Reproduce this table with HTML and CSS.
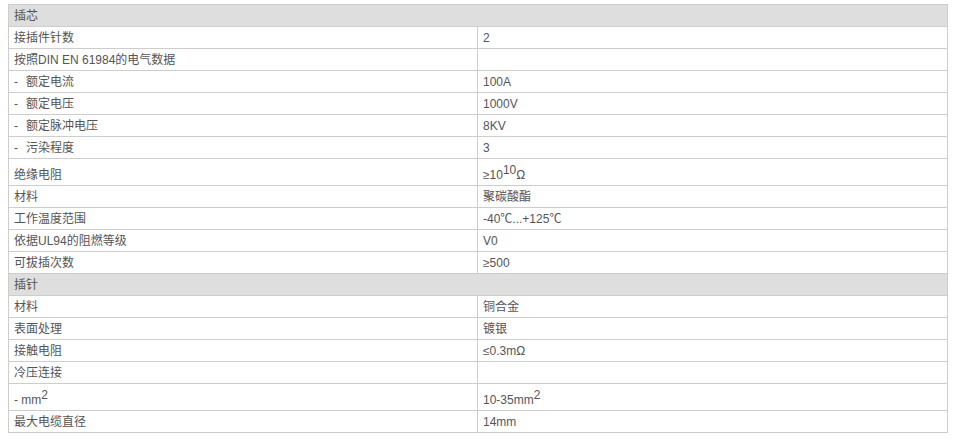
FILE: index.html
```html
<!DOCTYPE html>
<html lang="zh">
<head>
<meta charset="utf-8">
<link rel="stylesheet" href="styles.css">
</head>
<body>
<table class="spec">
  <colgroup><col class="c1"><col class="c2"></colgroup>
  <tr class="head"><td colspan="2">插芯</td></tr>
  <tr><td>接插件针数</td><td>2</td></tr>
  <tr><td>按照DIN EN 61984的电气数据</td><td></td></tr>
  <tr><td><span class="dash">-</span>额定电流</td><td>100A</td></tr>
  <tr><td><span class="dash">-</span>额定电压</td><td>1000V</td></tr>
  <tr><td><span class="dash">-</span>额定脉冲电压</td><td>8KV</td></tr>
  <tr><td><span class="dash">-</span>污染程度</td><td>3</td></tr>
  <tr class="tall"><td>绝缘电阻</td><td>≥10<sup>10</sup>Ω</td></tr>
  <tr><td>材料</td><td>聚碳酸酯</td></tr>
  <tr><td>工作温度范围</td><td>-40℃...+125℃</td></tr>
  <tr><td>依据UL94的阻燃等级</td><td>V0</td></tr>
  <tr><td>可拔插次数</td><td>≥500</td></tr>
  <tr class="head"><td colspan="2">插针</td></tr>
  <tr><td>材料</td><td>铜合金</td></tr>
  <tr><td>表面处理</td><td>镀银</td></tr>
  <tr><td>接触电阻</td><td>≤0.3mΩ</td></tr>
  <tr><td>冷压连接</td><td></td></tr>
  <tr class="tall"><td>- mm<sup>2</sup></td><td>10-35mm<sup>2</sup></td></tr>
  <tr><td>最大电缆直径</td><td>14mm</td></tr>
</table>
</body>
</html>
```
FILE: styles.css
```css
html, body { background: #fff; }
body {
  margin: 4px 8px;
  font-family: "Liberation Sans", Arial, "Noto Sans CJK SC", sans-serif;
  font-size: 12px;
  color: #555;
}
.spec {
  width: 940px;
  border-collapse: collapse;
  table-layout: fixed;
}
.spec .c1 { width: 469px; }
.spec tr { height: 22px; }
.spec td {
  border: 1px solid #cdcdcd;
  padding: 0 5px;
  line-height: 14px;
  vertical-align: middle;
  white-space: nowrap;
}
.spec tr.tall { height: 27px; }
.spec tr.tall td { padding-top: 5px; }
.spec tr.head td { background: #dedede; }
.spec .dash {
  display: inline-block;
  width: 12px;
}
.spec sup {
  font-size: 12px;
  line-height: 0;
  vertical-align: 5px;
}
```
